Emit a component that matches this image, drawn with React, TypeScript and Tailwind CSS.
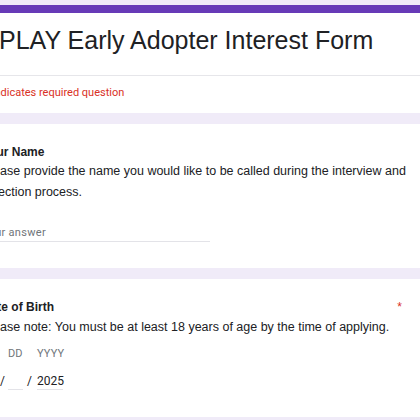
const Field = ({
  label,
  value,
  width,
}: {
  label: string;
  value?: string;
  width: string;
}) => (
  <div className={`flex flex-col ${width}`}>
    <span className="font-['Roboto',sans-serif] text-[11px] leading-[16px] text-[#70757a] tracking-[0.2px]">
      {label}
    </span>
    <span className="mt-[11px] h-[17px] border-b border-[#e3e3e8] font-['Roboto',sans-serif] text-[12px] leading-[16px] text-[#202124]">
      {value}
    </span>
  </div>
);

const Slash = ({ className }: { className: string }) => (
  <span
    className={`self-end pb-[1px] font-['Roboto',sans-serif] text-[12px] leading-[16px] text-[#202124] ${className}`}
  >
    /
  </span>
);

export default function App() {
  return (
    <div className="w-[420px] h-[420px] overflow-hidden bg-[#f0ebf8] pt-[5px] font-['Liberation_Sans',Arial,sans-serif] text-[#202124]">
      <div className="-ml-[40px] w-[480px] flex flex-col gap-[11px]">
        {/* header */}
        <div className="bg-white">
          <div className="h-[8px] bg-[#673ab7]" />
          <div className="pl-[39px] pt-[11px] pb-[19px] text-[25px] leading-[32px] whitespace-nowrap">
            PLAY Early Adopter Interest Form
          </div>
          <div className="h-px bg-[#e6e6ea]" />
          <div className="pl-[24px] pt-[9px] pb-[12px] font-['Roboto',sans-serif] text-[11px] leading-[16px] text-[#d93025]">
            * Indicates required question
          </div>
        </div>

        {/* name */}
        <div className="bg-white pl-[22px] pr-[24px] pt-[23px] pb-[26px]">
          <div className="text-[12px] leading-[11px] font-bold">Your Name</div>
          <p className="mt-[3px] text-[12.5px] leading-[21px]">
            Please provide the name you would like to be called during the
            interview and selection process.
          </p>
          <div className="mt-[22px] w-[228px] h-[17px] border-b border-[#e3e3e8] font-['Roboto',sans-serif] text-[11px] leading-[16px] text-[#70757a] tracking-[0.3px]">
            Your answer
          </div>
        </div>

        {/* date of birth */}
        <div className="bg-white pl-[22px] pr-[24px] pt-[23px] pb-[27px]">
          <div className="flex justify-between">
            <span className="text-[12px] leading-[11px] font-bold">
              Date of Birth
            </span>
            <span className="mr-[14px] text-[12px] leading-[11px] text-[#d93025]">
              *
            </span>
          </div>
          <p className="mt-[4px] text-[12.5px] leading-[21px]">
            Please note: You must be at least 18 years of age by the time of
            applying.
          </p>
          <div className="mt-[8px] flex">
            <div className="-ml-[12px]">
              <Field label="MM" width="w-[28px]" />
            </div>
            <Slash className="ml-[2px]" />
            <div className="ml-[3px]">
              <Field label="DD" width="w-[15px]" />
            </div>
            <Slash className="ml-[4px]" />
            <div className="ml-[5px]">
              <Field label="YYYY" value="2025" width="w-[26px]" />
            </div>
          </div>
        </div>
      </div>
    </div>
  );
}
